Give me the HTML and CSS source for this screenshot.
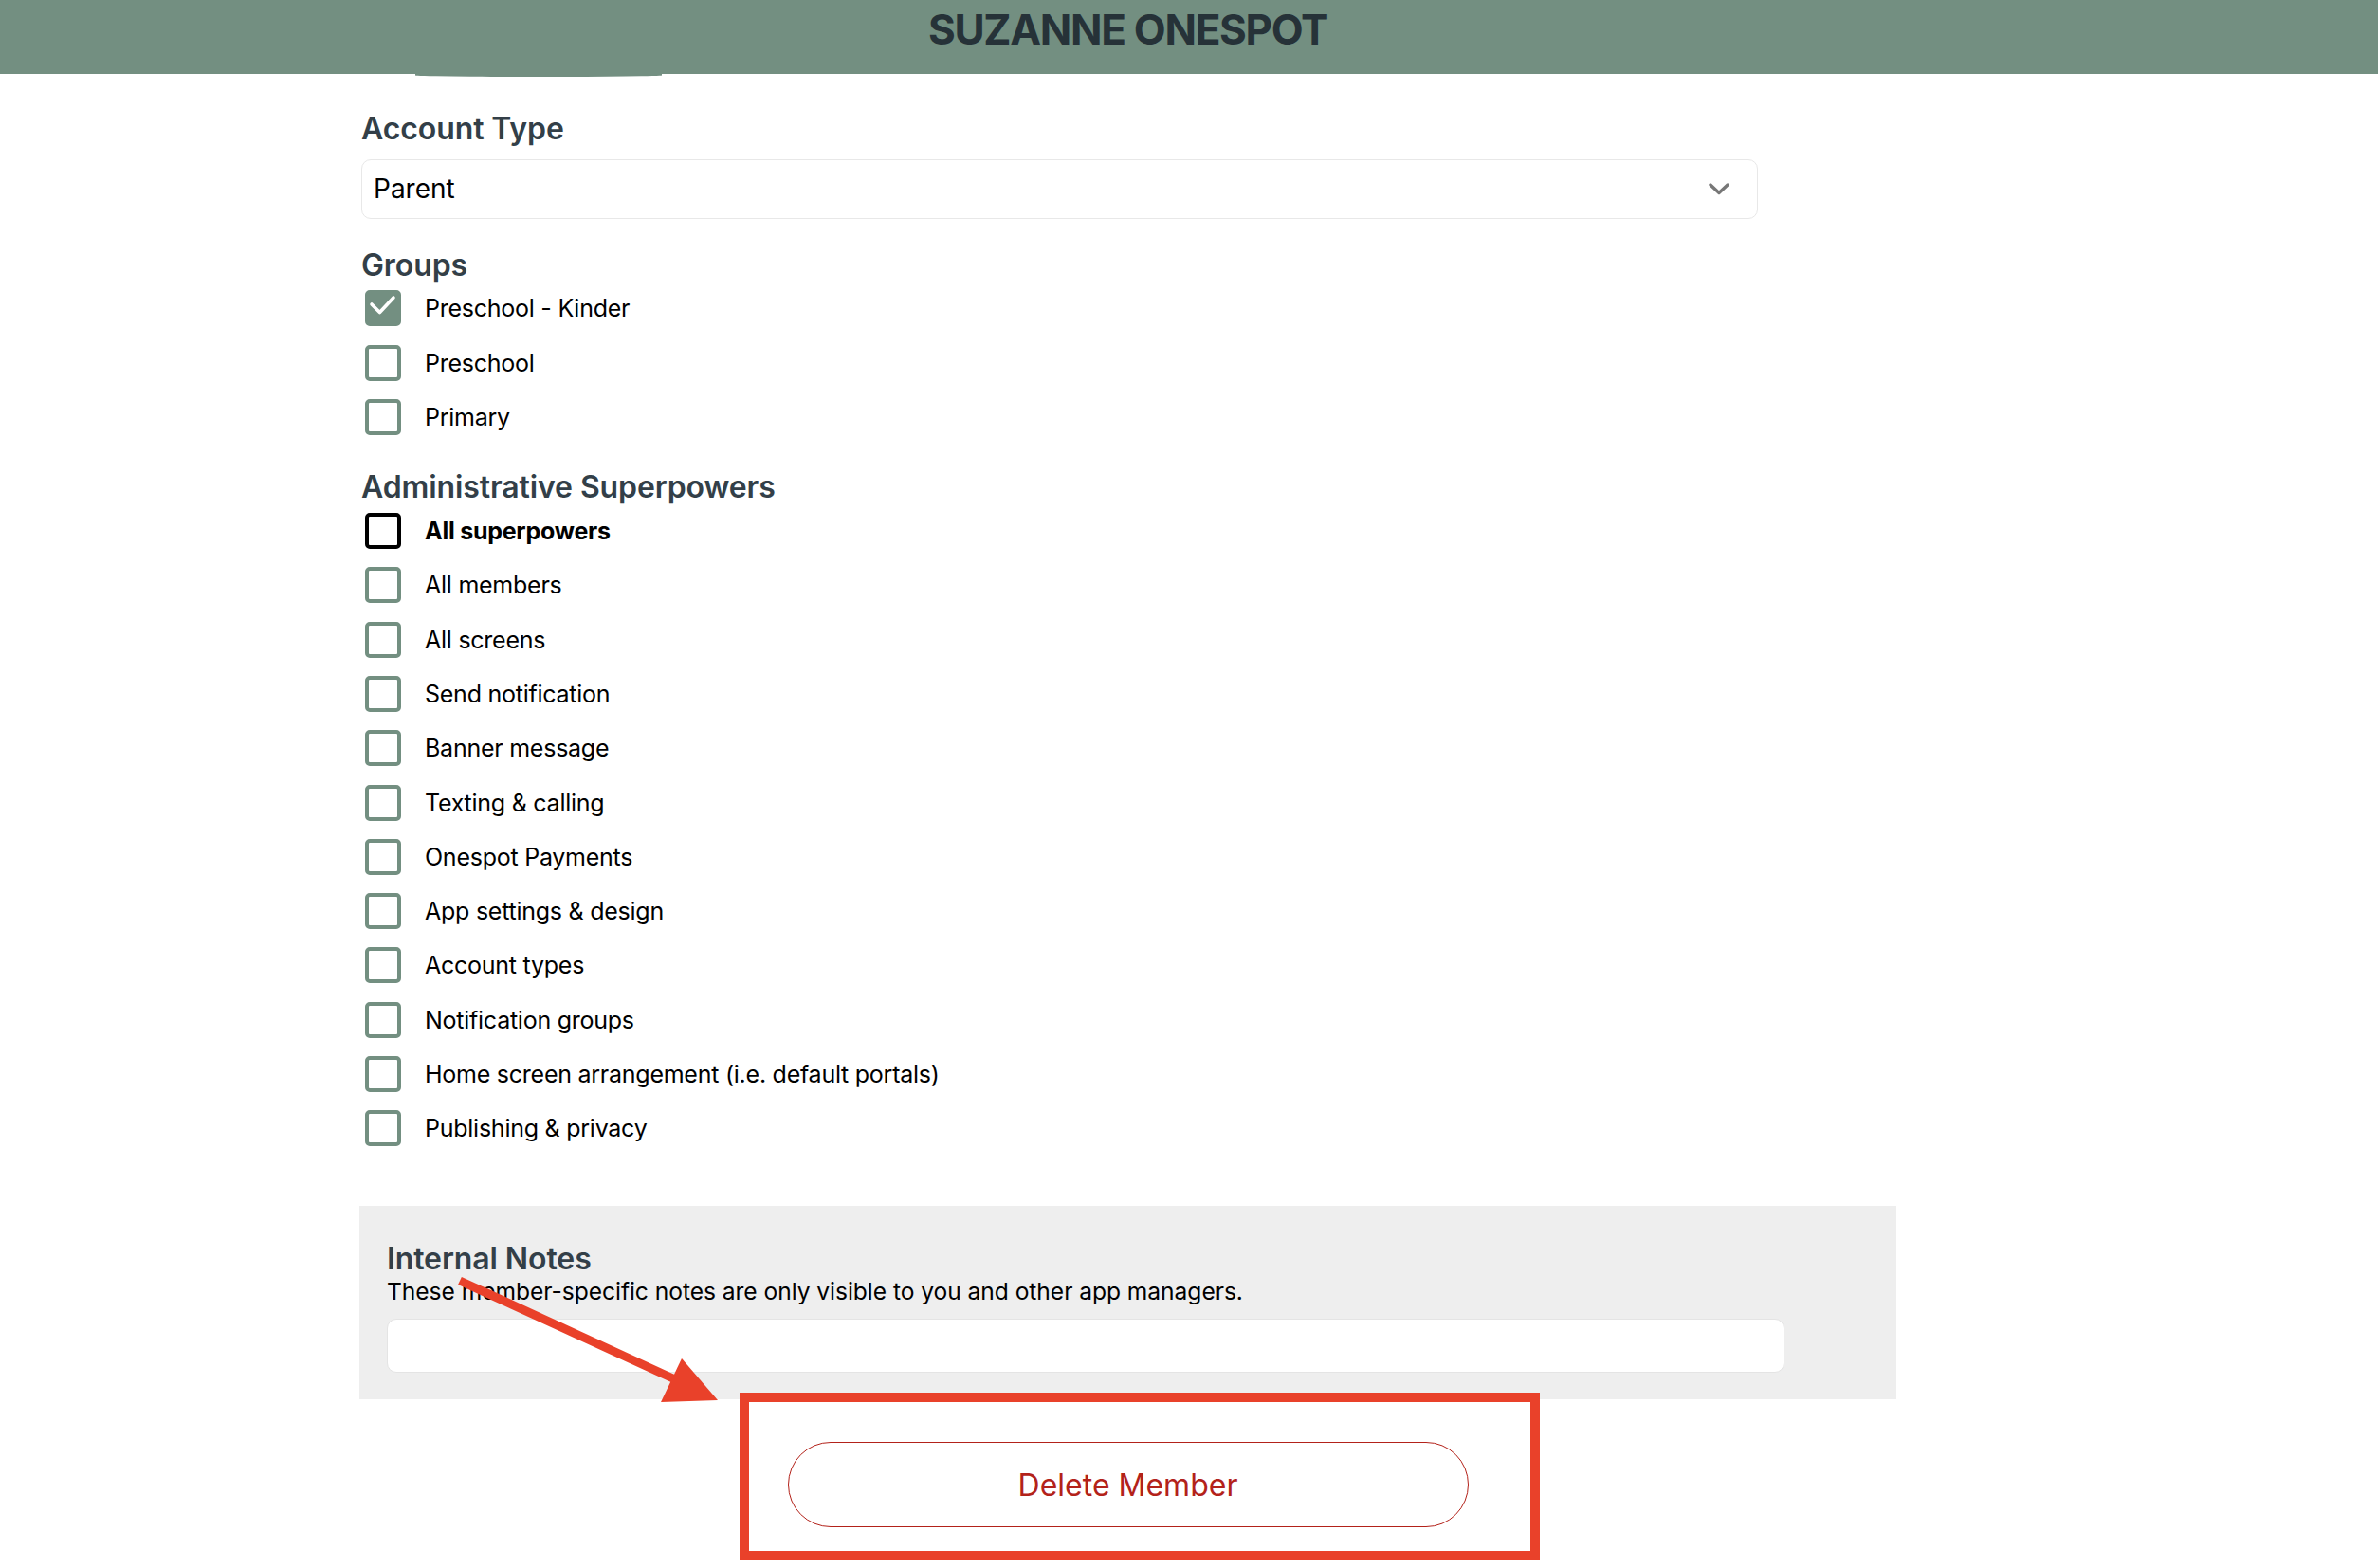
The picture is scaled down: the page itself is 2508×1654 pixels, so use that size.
FILE: index.html
```html
<!DOCTYPE html>
<html lang="en">
<head>
<meta charset="utf-8"/>
<title>Suzanne Onespot – Member</title>
<link rel="stylesheet" href="styles.css">
</head>
<body>
<header class="topbar">
  <div class="wrap">
    <h1>SUZANNE ONESPOT</h1>
  </div>
  <div class="tab-edge"></div>
</header>

<main class="wrap">
  <section class="form">
    <h2 class="acct">Account Type</h2>
    <div class="select">
      <span>Parent</span>
      <svg class="chev" width="22" height="13" viewBox="0 0 22 13"><path d="M2 2 L11 10.5 L20 2" fill="none" stroke="#777" stroke-width="3.4" stroke-linecap="round" stroke-linejoin="round"/></svg>
    </div>

    <h2 class="groups">Groups</h2>
    <div class="list">
      <label class="row"><span class="box checked"><svg width="30" height="30" viewBox="0 0 30 30"><path d="M3 11 L11.5 19.5 L26 4" fill="none" stroke="#fff" stroke-width="3.6" stroke-linecap="round" stroke-linejoin="round"/></svg></span>Preschool - Kinder</label>
      <label class="row"><span class="box"></span>Preschool</label>
      <label class="row"><span class="box"></span>Primary</label>
    </div>

    <h2 class="powers">Administrative Superpowers</h2>
    <div class="list">
      <label class="row all"><span class="box"></span>All superpowers</label>
      <label class="row"><span class="box"></span>All members</label>
      <label class="row"><span class="box"></span>All screens</label>
      <label class="row"><span class="box"></span>Send notification</label>
      <label class="row"><span class="box"></span>Banner message</label>
      <label class="row"><span class="box"></span>Texting &amp; calling</label>
      <label class="row"><span class="box"></span>Onespot Payments</label>
      <label class="row"><span class="box"></span>App settings &amp; design</label>
      <label class="row"><span class="box"></span>Account types</label>
      <label class="row"><span class="box"></span>Notification groups</label>
      <label class="row"><span class="box"></span>Home screen arrangement (i.e. default portals)</label>
      <label class="row"><span class="box"></span>Publishing &amp; privacy</label>
    </div>
  </section>

  <section class="notes">
    <h2>Internal Notes</h2>
    <p>These member-specific notes are only visible to you and other app managers.</p>
    <div class="notes-input"></div>
  </section>

  <div class="delete-row">
    <div class="delete-wrap">
      <button type="button" class="delete">Delete Member</button>
      <div class="mark-box"></div>
    </div>
  </div>
</main>

<!-- annotation arrow -->
<svg class="mark-arrow" width="300" height="150" viewBox="470 1340 300 150">
  <line x1="485" y1="1351" x2="714" y2="1456" stroke="#e9412a" stroke-width="9" stroke-linecap="butt"/>
  <polygon points="719,1433 697,1479 757,1477" fill="#e9412a"/>
</svg>
</body>
</html>
```

FILE: styles.css
```css
:root{--green:#738f81;--head:#333f48;--red:#e9412a;--danger:#b3221a;}
*{margin:0;padding:0;box-sizing:border-box;}
body{font-family:Inter,"Liberation Sans",Arial,sans-serif;color:#000;background:#fff;position:relative;min-height:1654px;}
.wrap{margin-left:379px;width:1621px;}

.topbar{background:var(--green);height:78px;position:relative;}
.topbar h1{text-align:center;font-size:44px;font-weight:700;letter-spacing:-1.3px;color:#263238;line-height:62px;}
.tab-edge{position:absolute;left:438px;top:78px;width:260px;height:3px;background:var(--green);border-radius:0 0 50% 50%;}

.form{padding:0 2px;}
h2{font-size:32px;font-weight:600;line-height:40px;color:var(--head);letter-spacing:-0.1px;}
.acct{margin-top:37.6px;}
.select{margin-top:12.4px;width:1473px;height:63px;border:1.5px solid #e8e8e8;border-radius:10px;display:flex;align-items:center;justify-content:space-between;padding:0 29px 0 12px;font-size:28px;}
.chev{display:block;}
.groups{margin-top:28.6px;}
.powers{margin-top:35.3px;}
.list{margin-top:6.8px;}
.row{display:flex;align-items:center;height:38px;margin-bottom:19.3px;font-size:25px;letter-spacing:-0.25px;padding-left:4px;}
.box{width:38px;height:38px;border:4px solid var(--green);border-radius:5px;margin-right:25px;flex:none;display:flex;align-items:center;justify-content:center;}
.box.checked{background:var(--green);}
.row.all{font-weight:700;}
.row.all .box{border-color:#000;}

.notes{margin-top:63px;background:#eee;padding:35.6px 0 28px 29px;}
.notes p{font-size:24.6px;line-height:28px;letter-spacing:-0.05px;}
.notes-input{margin-top:15.3px;width:1474px;height:57px;background:#fff;border:1.5px solid #e4e4e4;border-radius:10px;}

.delete-row{display:flex;justify-content:center;margin-top:45px;}
.delete-wrap{position:relative;}
.delete{width:718px;height:90px;border:1.5px solid var(--danger);border-radius:45px;background:#fff;color:var(--danger);font-family:inherit;font-size:32px;font-weight:400;}
.mark-box{position:absolute;left:-51px;top:-52px;right:-75px;bottom:-35px;border:10.5px solid var(--red);}
.mark-arrow{position:absolute;left:470px;top:1340px;}
```
